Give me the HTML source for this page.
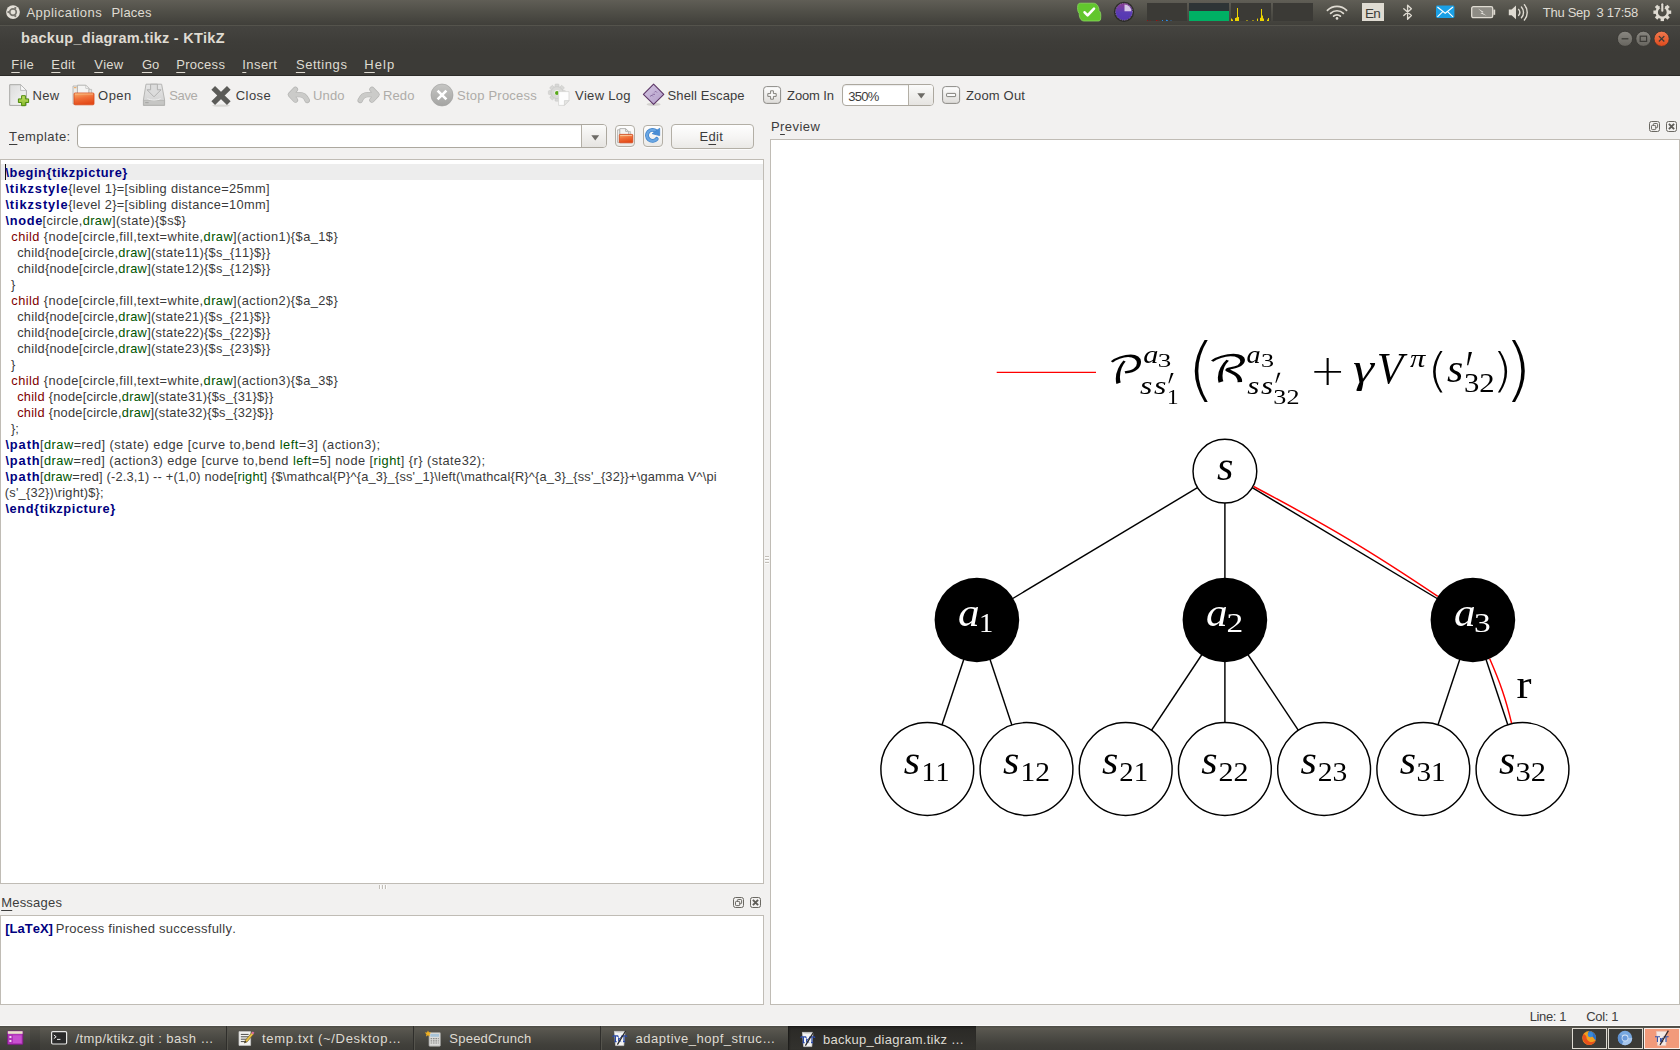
<!DOCTYPE html>
<html lang="en">
<head>
<meta charset="utf-8">
<title>backup_diagram.tikz - KTikZ</title>
<style>

*{box-sizing:border-box;margin:0;padding:0}
html,body{width:1680px;height:1050px;overflow:hidden;background:#f2f1f0;font-family:"Liberation Sans",sans-serif;font-size:13px;color:#3c3c3c;font-kerning:none}
.abs{position:absolute}
.L{position:absolute;white-space:pre;line-height:0;font-kerning:none}
.L u{text-decoration:underline;text-decoration-thickness:1px;text-underline-offset:3px}
svg{position:absolute;overflow:visible}
#panel{left:0;top:0;width:1680px;height:25px;background:linear-gradient(#605e56,#4f4e47 50%,#403f3a);color:#dfdbd2}
#panelline{left:0;top:25px;width:1680px;height:1px;background:#54534c}
#title{left:0;top:26px;width:1680px;height:26px;background:linear-gradient(#454440,#3e3d39 60%,#3c3b37);color:#dfdbd2}
#menu{left:0;top:52px;width:1680px;height:24px;background:#3c3b37;color:#dfdbd2;border-bottom:1px solid #2c2b28}
#editor{left:0;top:159px;width:764px;height:725px;background:#fff;border:1px solid #c0bcb5}
#hl{left:1px;top:164px;width:762px;height:16px;background:#ededed}
#cursor{left:5px;top:164px;width:1px;height:16px;background:#111}
#msg{left:0;top:915px;width:764px;height:90px;background:#fff;border:1px solid #c0bcb5}
#preview{left:770px;top:139px;width:910px;height:866px;background:#fff;border:1px solid #c0bcb5}
#taskbar{left:0;top:1026px;width:1680px;height:24px;background:linear-gradient(#4b4a44,#5a5850 10%,#4c4b45 45%,#403f3a 80%,#3d3c38);color:#dfdbd2}
#taskline{left:0;top:1025px;width:1680px;height:1px;background:#fbfbfa}
.code b{color:#000080}
.code i{font-style:normal;color:#005400}
.code em{font-style:normal;color:#800000}
.field{background:#fff;border:1px solid #aca89f;border-radius:3px;box-shadow:inset 0 1px 1px rgba(0,0,0,.08)}
.btn{border:1px solid #b3afa6;border-radius:4px;background:linear-gradient(#fefefe,#f5f4f3 55%,#eae9e6);box-shadow:0 1px 0 rgba(255,255,255,.7)}
.sep{width:1px;height:24px;top:1026px;background:#2f2e2b;box-shadow:1px 0 0 #55544d}

</style>
</head>
<body>
<div id="ui">
<div id="panel" class="abs"></div>
<div id="title" class="abs"></div><div id="panelline" class="abs"></div>
<div id="menu" class="abs"></div>
<span class="L" style="left:26.40px;top:13.00px;font-size:13px;letter-spacing:0.483px;color:#dfdbd2;">Applications</span>
<span class="L" style="left:111.48px;top:13.00px;font-size:13px;letter-spacing:0.181px;color:#dfdbd2;">Places</span>
<div class="abs" style="left:1362px;top:3px;width:22px;height:18px;background:#dfdbd2"></div>
<span class="L" style="left:1364.95px;top:14.00px;font-size:13.5px;letter-spacing:-0.700px;color:#3c3b37;">En</span>
<span class="L" style="left:1542.80px;top:13.00px;font-size:13px;letter-spacing:-0.287px;color:#dfdbd2;">Thu Sep  3 17:58</span>
<span class="L" style="left:21.09px;top:38.00px;font-size:14.5px;letter-spacing:0.264px;color:#dfdbd2;font-weight:bold;">backup_diagram.tikz - KTikZ</span>
<span class="L" style="left:11.28px;top:65.00px;font-size:13px;letter-spacing:0.532px;color:#dfdbd2;"><u>F</u>ile</span>
<span class="L" style="left:51.28px;top:65.00px;font-size:13px;letter-spacing:0.423px;color:#dfdbd2;"><u>E</u>dit</span>
<span class="L" style="left:94.30px;top:65.00px;font-size:13px;letter-spacing:0.221px;color:#dfdbd2;"><u>V</u>iew</span>
<span class="L" style="left:141.89px;top:65.00px;font-size:13px;letter-spacing:0.094px;color:#dfdbd2;"><u>G</u>o</span>
<span class="L" style="left:176.28px;top:65.00px;font-size:13px;letter-spacing:0.277px;color:#dfdbd2;"><u>P</u>rocess</span>
<span class="L" style="left:242.28px;top:65.00px;font-size:13px;letter-spacing:0.432px;color:#dfdbd2;"><u>I</u>nsert</span>
<span class="L" style="left:295.89px;top:65.00px;font-size:13px;letter-spacing:0.577px;color:#dfdbd2;"><u>S</u>ettings</span>
<span class="L" style="left:364.28px;top:65.00px;font-size:13px;letter-spacing:1.102px;color:#dfdbd2;"><u>H</u>elp</span>
<span class="L" style="left:32.48px;top:96.00px;font-size:13px;letter-spacing:0.275px;color:#3c3c3c;">New</span>
<span class="L" style="left:98.09px;top:96.00px;font-size:13px;letter-spacing:0.446px;color:#3c3c3c;">Open</span>
<span class="L" style="left:169.29px;top:96.00px;font-size:13px;letter-spacing:-0.366px;color:#aeaca8;">Save</span>
<span class="L" style="left:235.69px;top:96.00px;font-size:13px;letter-spacing:0.475px;color:#3c3c3c;">Close</span>
<span class="L" style="left:312.99px;top:96.00px;font-size:13px;letter-spacing:0.154px;color:#aeaca8;">Undo</span>
<span class="L" style="left:382.88px;top:96.00px;font-size:13px;letter-spacing:0.188px;color:#aeaca8;">Redo</span>
<span class="L" style="left:457.09px;top:96.00px;font-size:13px;letter-spacing:0.209px;color:#aeaca8;">Stop Process</span>
<span class="L" style="left:575.00px;top:96.00px;font-size:13px;letter-spacing:0.279px;color:#3c3c3c;">View Log</span>
<span class="L" style="left:667.59px;top:96.00px;font-size:13px;letter-spacing:0.096px;color:#3c3c3c;">Shell Escape</span>
<span class="L" style="left:787.09px;top:96.00px;font-size:13px;letter-spacing:-0.125px;color:#3c3c3c;">Zoom In</span>
<span class="L" style="left:965.89px;top:96.00px;font-size:13px;letter-spacing:0.181px;color:#3c3c3c;">Zoom Out</span>
<div class="abs field" style="left:842px;top:84px;width:92px;height:22px;border-radius:4px"></div>
<div class="abs" style="left:908px;top:85px;width:25px;height:20px;border-left:1px solid #b3afa6;border-radius:0 3px 3px 0;background:linear-gradient(#fbfbfa,#e6e4e1)"></div>
<svg style="left:917px;top:93px" width="9" height="6"><path d="M0.3 0.3H8.2L4.25 5.6Z" fill="#6d6b66"/></svg>
<span class="L" style="left:848.29px;top:97.00px;font-size:13px;letter-spacing:-0.719px;color:#3c3c3c;">350%</span>
<span class="L" style="left:9.00px;top:137.00px;font-size:13px;letter-spacing:0.422px;color:#3c3c3c;"><u>T</u>emplate:</span>
<div class="abs field" style="left:77px;top:124px;width:530px;height:24px;border-radius:4px"></div>
<div class="abs" style="left:581px;top:125px;width:25px;height:22px;border-left:1px solid #b3afa6;border-radius:0 3px 3px 0;background:linear-gradient(#fbfbfa,#e6e4e1)"></div>
<svg style="left:591px;top:135px" width="9" height="6"><path d="M0.3 0.3H8.2L4.25 5.6Z" fill="#6d6b66"/></svg>
<div class="abs btn" style="left:615px;top:125px;width:20px;height:22px"></div>
<div class="abs btn" style="left:643px;top:125px;width:20px;height:22px"></div>
<div class="abs btn" style="left:671px;top:124px;width:83px;height:25px"></div>
<span class="L" style="left:699.38px;top:137.00px;font-size:13px;letter-spacing:0.390px;color:#3c3c3c;">E<u>d</u>it</span>
<span class="L" style="left:770.98px;top:127.00px;font-size:13px;letter-spacing:0.437px;color:#3c3c3c;">P<u>r</u>eview</span>
<div id="editor" class="abs"></div><div id="hl" class="abs"></div><div id="cursor" class="abs"></div>
<div id="preview" class="abs"></div>
<span class="L" style="left:1.18px;top:903.00px;font-size:13px;letter-spacing:0.210px;color:#3c3c3c;"><u>M</u>essages</span>
<div id="msg" class="abs"></div>
<span class="L" style="left:5.29px;top:929.00px;font-size:13px;color:#000080;font-weight:bold;">[LaTeX]</span>
<span class="L" style="left:55.78px;top:929.00px;font-size:13px;letter-spacing:0.252px;color:#3c3c3c;">Process finished successfully.</span>
<span class="L" style="left:1529.68px;top:1017.00px;font-size:13px;letter-spacing:-0.365px;color:#3c3c3c;">Line: 1</span>
<span class="L" style="left:1586.19px;top:1017.00px;font-size:13px;letter-spacing:-0.325px;color:#3c3c3c;">Col: 1</span>
<div id="taskline" class="abs"></div><div id="taskbar" class="abs"></div>
<div class="abs" style="left:788px;top:1026px;width:188px;height:24px;background:linear-gradient(#2a2926,#33322e);box-shadow:inset 1px 1px 2px rgba(0,0,0,.5)"></div>
<div class="abs sep" style="left:226px"></div>
<div class="abs sep" style="left:413px"></div>
<div class="abs sep" style="left:600px"></div>
<span class="L" style="left:75.40px;top:1039.00px;font-size:13px;letter-spacing:0.461px;color:#dfdbd2;">/tmp/ktikz.git : bash …</span>
<span class="L" style="left:262.00px;top:1039.00px;font-size:13px;letter-spacing:0.687px;color:#dfdbd2;">temp.txt (~/Desktop…</span>
<span class="L" style="left:449.29px;top:1039.00px;font-size:13px;letter-spacing:0.244px;color:#dfdbd2;">SpeedCrunch</span>
<span class="L" style="left:635.59px;top:1039.00px;font-size:13px;letter-spacing:0.508px;color:#dfdbd2;">adaptive_hopf_struc…</span>
<span class="L" style="left:823.09px;top:1040.00px;font-size:13px;letter-spacing:0.260px;color:#dfdbd2;">backup_diagram.tikz …</span>
</div>
<div id="source" class="source">
<span class="L code" style="left:5.40px;top:173.00px;font-size:12.8px;letter-spacing:0.573px;color:#000080;font-weight:bold;">\begin{tikzpicture}</span>
<span class="L code" style="left:5.40px;top:189.00px;font-size:12.8px;letter-spacing:0.917px;color:#000080;font-weight:bold;">\tikzstyle</span>
<span class="L code" style="left:68.20px;top:189.00px;font-size:12.8px;letter-spacing:0.335px;color:#3a3a3a;">{level 1}=[sibling distance=25mm]</span>
<span class="L code" style="left:5.40px;top:205.00px;font-size:12.8px;letter-spacing:0.917px;color:#000080;font-weight:bold;">\tikzstyle</span>
<span class="L code" style="left:68.20px;top:205.00px;font-size:12.8px;letter-spacing:0.335px;color:#3a3a3a;">{level 2}=[sibling distance=10mm]</span>
<span class="L code" style="left:5.40px;top:221.00px;font-size:12.8px;letter-spacing:0.722px;color:#000080;font-weight:bold;">\node</span>
<span class="L code" style="left:42.50px;top:221.00px;font-size:12.8px;letter-spacing:0.395px;color:#3a3a3a;">[circle,<i>draw</i>](state){$s$}</span>
<span class="L code" style="left:11.30px;top:237.00px;font-size:12.8px;letter-spacing:0.443px;color:#3a3a3a;"><em>child</em> {node[circle,fill,text=white,<i>draw</i>](action1){$a_1$}</span>
<span class="L code" style="left:17.20px;top:253.00px;font-size:12.8px;letter-spacing:0.281px;color:#3a3a3a;">child{node[circle,<i>draw</i>](state11){$s_{11}$}}</span>
<span class="L code" style="left:17.20px;top:269.00px;font-size:12.8px;letter-spacing:0.281px;color:#3a3a3a;">child{node[circle,<i>draw</i>](state12){$s_{12}$}}</span>
<span class="L code" style="left:11.00px;top:285.00px;font-size:12.8px;color:#3a3a3a;">}</span>
<span class="L code" style="left:11.30px;top:301.00px;font-size:12.8px;letter-spacing:0.443px;color:#3a3a3a;"><em>child</em> {node[circle,fill,text=white,<i>draw</i>](action2){$a_2$}</span>
<span class="L code" style="left:17.20px;top:317.00px;font-size:12.8px;letter-spacing:0.281px;color:#3a3a3a;">child{node[circle,<i>draw</i>](state21){$s_{21}$}}</span>
<span class="L code" style="left:17.20px;top:333.00px;font-size:12.8px;letter-spacing:0.281px;color:#3a3a3a;">child{node[circle,<i>draw</i>](state22){$s_{22}$}}</span>
<span class="L code" style="left:17.20px;top:349.00px;font-size:12.8px;letter-spacing:0.281px;color:#3a3a3a;">child{node[circle,<i>draw</i>](state23){$s_{23}$}}</span>
<span class="L code" style="left:11.00px;top:365.00px;font-size:12.8px;color:#3a3a3a;">}</span>
<span class="L code" style="left:11.30px;top:381.00px;font-size:12.8px;letter-spacing:0.443px;color:#3a3a3a;"><em>child</em> {node[circle,fill,text=white,<i>draw</i>](action3){$a_3$}</span>
<span class="L code" style="left:17.20px;top:397.00px;font-size:12.8px;letter-spacing:0.261px;color:#3a3a3a;"><em>child</em> {node[circle,<i>draw</i>](state31){$s_{31}$}}</span>
<span class="L code" style="left:17.20px;top:413.00px;font-size:12.8px;letter-spacing:0.261px;color:#3a3a3a;"><em>child</em> {node[circle,<i>draw</i>](state32){$s_{32}$}}</span>
<span class="L code" style="left:11.00px;top:429.00px;font-size:12.8px;color:#3a3a3a;">};</span>
<span class="L code" style="left:5.40px;top:445.00px;font-size:12.8px;letter-spacing:0.923px;color:#000080;font-weight:bold;">\path</span>
<span class="L code" style="left:5.40px;top:461.00px;font-size:12.8px;letter-spacing:0.923px;color:#000080;font-weight:bold;">\path</span>
<span class="L code" style="left:5.40px;top:477.00px;font-size:12.8px;letter-spacing:0.923px;color:#000080;font-weight:bold;">\path</span>
<span class="L code" style="left:39.90px;top:445.00px;font-size:12.8px;letter-spacing:0.485px;color:#3a3a3a;">[<i>draw</i>=red] (state) edge [curve to,bend <i>left</i>=3] (action3);</span>
<span class="L code" style="left:39.90px;top:461.00px;font-size:12.8px;letter-spacing:0.453px;color:#3a3a3a;">[<i>draw</i>=red] (action3) edge [curve to,bend <i>left</i>=5] node [<i>right</i>] {r} (state32);</span>
<span class="L code" style="left:39.90px;top:477.00px;font-size:12.8px;letter-spacing:0.202px;color:#3a3a3a;">[<i>draw</i>=red] (-2.3,1) -- +(1,0) node[<i>right</i>] {$\mathcal{P}^{a_3}_{ss'_1}\left(\mathcal{R}^{a_3}_{ss'_{32}}+\gamma V^\pi</span>
<span class="L code" style="left:4.85px;top:493.00px;font-size:12.8px;letter-spacing:0.217px;color:#3a3a3a;">(s'_{32})\right)$};</span>
<span class="L code" style="left:5.40px;top:509.00px;font-size:12.8px;letter-spacing:0.593px;color:#000080;font-weight:bold;">\end{tikzpicture}</span>
</div>
<div id="icons">
<svg width="0" height="0" style="left:0;top:0"><defs>
<linearGradient id="gPage" x1="0" y1="0" x2="1" y2="1"><stop offset="0" stop-color="#dcdcdc"/><stop offset="1" stop-color="#f6f6f6"/></linearGradient>
<linearGradient id="gOr" x1="0" y1="0" x2="0.3" y2="1"><stop offset="0" stop-color="#f8b06c"/><stop offset="0.5" stop-color="#f0703a"/><stop offset="1" stop-color="#e44a18"/></linearGradient>
<linearGradient id="gGr" x1="0" y1="0" x2="0" y2="1"><stop offset="0" stop-color="#c4e066"/><stop offset="1" stop-color="#86b82a"/></linearGradient>
<linearGradient id="gSave" x1="0" y1="0" x2="0" y2="1"><stop offset="0" stop-color="#e6e6e6"/><stop offset="1" stop-color="#d0d0d0"/></linearGradient>
<linearGradient id="gStop" x1="0" y1="0" x2="0" y2="1"><stop offset="0" stop-color="#c6c6c4"/><stop offset="1" stop-color="#a4a4a2"/></linearGradient>
<linearGradient id="gBtn" x1="0" y1="0" x2="0" y2="1"><stop offset="0" stop-color="#ffffff"/><stop offset="1" stop-color="#dddbd8"/></linearGradient>
<linearGradient id="gClk" x1="0" y1="0" x2="0" y2="1"><stop offset="0" stop-color="#8a3c92"/><stop offset="0.55" stop-color="#5a3cb4"/><stop offset="1" stop-color="#5636b0"/></linearGradient>
<linearGradient id="gPur" x1="0" y1="0" x2="1" y2="1"><stop offset="0" stop-color="#d4c6e2"/><stop offset="1" stop-color="#b29cc8"/></linearGradient>
<linearGradient id="gMin" x1="0" y1="0" x2="0" y2="1"><stop offset="0" stop-color="#8a8882"/><stop offset="1" stop-color="#66645e"/></linearGradient>
<linearGradient id="gCls" x1="0" y1="0" x2="0" y2="1"><stop offset="0" stop-color="#f27a50"/><stop offset="1" stop-color="#dd4a1c"/></linearGradient>
<linearGradient id="gBlue" x1="0" y1="0" x2="0" y2="1"><stop offset="0" stop-color="#7ab0e6"/><stop offset="1" stop-color="#2f78c8"/></linearGradient>
</defs></svg>
<svg style="left:5px;top:4px" width="16" height="16" viewBox="0 0 16 16" ><circle cx="8" cy="8.1" r="6.9" fill="#e4e0d8"/><circle cx="8" cy="8.1" r="3.3" fill="none" stroke="#77756e" stroke-width="1.7"/>
<circle cx="3.4" cy="8.1" r="1.15" fill="#77756e"/><circle cx="10.3" cy="4.1" r="1.15" fill="#77756e"/><circle cx="10.3" cy="12.1" r="1.15" fill="#77756e"/></svg>
<svg style="left:1077px;top:2px" width="25" height="20" viewBox="0 0 25 20" ><path d="M3.5 1.2H16.5C20 1.2 22 5 22 8.5C24 10 24 13 23.6 17C23.4 18.6 22.5 19 21 19H7C3.5 19 2.2 15 2.2 11.5C0.4 9.5 0.4 6 0.8 3.4C1 1.8 2 1.2 3.5 1.2Z" fill="#62c62e" stroke="#8ad860" stroke-width="0.8"/>
<path d="M7.6 10.3L10.6 13.4L17 6.6" fill="none" stroke="#fff" stroke-width="2.6" stroke-linecap="round" stroke-linejoin="round"/></svg>
<svg style="left:1113px;top:1px" width="22" height="22" viewBox="0 0 22 22" ><circle cx="11" cy="10.8" r="10.1" fill="#2b2a27"/><circle cx="11" cy="10.8" r="8.5" fill="url(#gClk)" stroke="#a890cc" stroke-width="0.7" stroke-dasharray="0.8 1"/>
<path d="M11.5 10.3V3.4A6.9 6.9 0 0 1 18.4 10.3Z" fill="#d6c6e6"/></svg>
<svg style="left:1147px;top:3px" width="166" height="18" viewBox="0 0 166 18" ><rect x="0" y="0" width="40" height="18" fill="#3b3a36"/><path d="M0.5 18V17.4M3 18V17.6M9.5 18V17.2M11 18V17.5" stroke="#c00000" stroke-width="1"/><path d="M15.5 18V17M19.5 18V16.8M20.5 18V17.2M24 18V17.4" stroke="#2a8be8" stroke-width="1"/><rect x="42" y="0" width="40" height="18" fill="#2e3436"/><rect x="42" y="8" width="40" height="10" fill="#00b064"/><rect x="84" y="0" width="40" height="18" fill="#3b3a36"/><path d="M84.5 18V15.5M85.5 18V16.5M88.5 18V15M89.5 18V14.5M90.5 18V5M91.5 18V14M100 18V17M106 18V17M110.5 18V15.6M113.5 18V14.8M114.5 18V6M115.5 18V12.5M116.5 18V15.5M120.5 18V16.5M121.5 18V15" stroke="#edd400" stroke-width="1"/><rect x="126" y="0" width="40" height="18" fill="#3b3a36"/></svg>
<svg style="left:1326px;top:5px" width="22" height="15" viewBox="0 0 22 15" ><g fill="none" stroke="#dfdbd2" stroke-linecap="round"><path d="M1.4 5.4A13.5 13.5 0 0 1 20.6 5.4" stroke-width="1.7"/><path d="M4.6 8.4A9 9 0 0 1 17.4 8.4" stroke-width="1.7"/><path d="M7.6 11.2A4.8 4.8 0 0 1 14.4 11.2" stroke-width="1.7"/></g><circle cx="11" cy="13.4" r="1.3" fill="#dfdbd2"/></svg>
<svg style="left:1402px;top:4px" width="12" height="17" viewBox="0 0 12 17" ><path d="M1.8 4.8L9.4 11.6L5.6 15.2V1.2L9.4 4.8L1.8 11.6" fill="none" stroke="#dfdbd2" stroke-width="1.35" stroke-linejoin="round" stroke-linecap="round"/></svg>
<svg style="left:1436px;top:5px" width="19" height="14" viewBox="0 0 19 14" ><rect x="0" y="0.6" width="18.4" height="12.4" rx="1.4" fill="#1aa0e6"/><path d="M1.4 2L9.2 8.2L17 2M1.4 11.8L6.8 6.6M17 11.8L11.6 6.6" fill="none" stroke="#fff" stroke-width="1.1"/></svg>
<svg style="left:1471px;top:6px" width="25" height="13" viewBox="0 0 25 13" ><rect x="0.7" y="0.7" width="21" height="11" rx="1.6" fill="#8e8c85" stroke="#dfdbd2" stroke-width="1.3"/><rect x="22.4" y="3.6" width="1.8" height="5.2" fill="#dfdbd2"/><path d="M7 2.6L12.6 6L10.8 6.6L15.6 9.8L9.4 7.2L11.4 6.4Z" fill="#efece6"/></svg>
<svg style="left:1508px;top:4px" width="22" height="17" viewBox="0 0 22 17" ><path d="M0.8 5.6H3.6L8 1.6V15.2L3.6 11.2H0.8Z" fill="#dfdbd2"/><g fill="none" stroke="#dfdbd2" stroke-width="1.4" stroke-linecap="round"><path d="M10.6 5.4A4.6 4.6 0 0 1 10.6 11.4"/><path d="M13.4 3A8 8 0 0 1 13.4 13.8"/><path d="M16.4 0.8A11.6 11.6 0 0 1 16.4 16"/></g></svg>
<svg style="left:1653px;top:3px" width="19" height="18" viewBox="0 0 19 18" ><g transform="translate(9.3 9.2)"><circle r="5.6" fill="none" stroke="#dfdbd2" stroke-width="2.4"/><rect x="-1.7" y="-8.9" width="3.4" height="4" transform="rotate(45)" fill="#dfdbd2"/><rect x="-1.7" y="-8.9" width="3.4" height="4" transform="rotate(90)" fill="#dfdbd2"/><rect x="-1.7" y="-8.9" width="3.4" height="4" transform="rotate(135)" fill="#dfdbd2"/><rect x="-1.7" y="-8.9" width="3.4" height="4" transform="rotate(180)" fill="#dfdbd2"/><rect x="-1.7" y="-8.9" width="3.4" height="4" transform="rotate(225)" fill="#dfdbd2"/><rect x="-1.7" y="-8.9" width="3.4" height="4" transform="rotate(270)" fill="#dfdbd2"/><rect x="-1.7" y="-8.9" width="3.4" height="4" transform="rotate(315)" fill="#dfdbd2"/><rect x="-2.6" y="-9" width="5.2" height="5" fill="#4a4943"/><rect x="-1.05" y="-9" width="2.1" height="8.6" rx="1" fill="#dfdbd2"/></g></svg>
<svg style="left:1616px;top:30px" width="56" height="18" viewBox="0 0 56 18" ><circle cx="9" cy="8.8" r="7.6" fill="url(#gMin)" stroke="#33322e" stroke-width="0.8"/><path d="M5.6 8.8H12.4" stroke="#3c3b37" stroke-width="1.3"/>
<circle cx="27.4" cy="8.8" r="7.6" fill="url(#gMin)" stroke="#33322e" stroke-width="0.8"/><rect x="24.2" y="6.2" width="6.4" height="5.2" fill="none" stroke="#3c3b37" stroke-width="1.2"/>
<circle cx="45.6" cy="8.8" r="7.6" fill="url(#gCls)" stroke="#33322e" stroke-width="0.8"/><path d="M42.9 6.1L48.3 11.5M48.3 6.1L42.9 11.5" stroke="#3c3b37" stroke-width="1.3"/></svg>
<svg style="left:8px;top:83px" width="22" height="24" viewBox="0 0 22 24" ><path d="M1.7 1.7H12.6L18.4 7.4V22.4H1.7Z" fill="url(#gPage)" stroke="#a8a8a6" stroke-width="1"/><path d="M12.6 1.7V7.4H18.4Z" fill="#fafafa" stroke="#b4b4b2" stroke-width="0.8"/>
<path d="M13.6 12.7H17.4V15.9H20.6V19.5H17.4V22.7H13.6V19.5H10.4V15.9H13.6Z" fill="url(#gGr)" stroke="#4e8a0c" stroke-width="1" stroke-linejoin="round"/></svg>
<svg style="left:72px;top:83px" width="23" height="24" viewBox="0 0 23 24" ><path d="M1 3H5.5V21H1Z" fill="#ecebe8" stroke="#b0aeaa" stroke-width="0.8"/><rect x="2" y="4.2" width="2.4" height="1" fill="#f0a050"/>
<path d="M5.4 2.2H13.8L17 5.4V14H5.4Z" fill="#f4f4f3" stroke="#aeaeac" stroke-width="0.9"/><path d="M13.8 2.2V5.4H17Z" fill="#fff" stroke="#b8b8b6" stroke-width="0.7"/><path d="M17 6.4H19.6V14H17Z" fill="#e4e4e2" stroke="#b4b4b2" stroke-width="0.7"/>
<rect x="2" y="10" width="20" height="11.8" rx="1" fill="url(#gOr)" stroke="#d84818" stroke-width="0.8"/><path d="M3 11H21" stroke="#fbd0a0" stroke-width="0.8" opacity="0.8"/></svg>
<svg style="left:142px;top:83px" width="24" height="24" viewBox="0 0 24 24" ><path d="M4 1.2H19.6L22.6 17V22.4H1.4V17Z" fill="url(#gSave)" stroke="#b6b6b4" stroke-width="1"/><path d="M1.6 17.4H22.4V22.2H1.6Z" fill="#c6c6c4" stroke="#b0b0ae" stroke-width="0.7"/><rect x="3.2" y="19" width="3.4" height="1.2" fill="#a8a8a6"/>
<path d="M5.4 15.4C8.5 17.6 15.5 17.6 18.6 15.4" fill="none" stroke="#efefef" stroke-width="1"/>
<path d="M8.6 1.2H15.4V6.8H19L12 13.8L5 6.8H8.6Z" fill="#dcdcdc" stroke="#adadab" stroke-width="0.9" stroke-linejoin="round"/></svg>
<svg style="left:210px;top:85px" width="22" height="22" viewBox="0 0 22 22" ><ellipse cx="11" cy="20.6" rx="9" ry="1.2" fill="#d8d7d4"/><path d="M3.2 2.8L18.8 18.2M18.8 2.8L3.2 18.2" stroke="#5b5b58" stroke-width="5.2"/></svg>
<svg style="left:286.5px;top:86px" width="24" height="18" viewBox="0 0 24 18" ><path d="M8.4 3.4L3.4 8.7L8.4 14M4.6 8.6H12.6C16.6 8.6 18.8 11 20.2 14.4" fill="none" stroke="#b3b3b1" stroke-width="5.4" stroke-linecap="round" stroke-linejoin="round"/><path d="M8.4 3.4L3.4 8.7L8.4 14M4.6 8.6H12.6C16.6 8.6 18.8 11 20.2 14.4" fill="none" stroke="#cbcbc9" stroke-width="4.1" stroke-linecap="round" stroke-linejoin="round"/></svg>
<svg style="left:356.5px;top:86px" width="24" height="18" viewBox="0 0 24 18" ><g transform="translate(23.4 0) scale(-1 1)"><path d="M8.4 3.4L3.4 8.7L8.4 14M4.6 8.6H12.6C16.6 8.6 18.8 11 20.2 14.4" fill="none" stroke="#b3b3b1" stroke-width="5.4" stroke-linecap="round" stroke-linejoin="round"/><path d="M8.4 3.4L3.4 8.7L8.4 14M4.6 8.6H12.6C16.6 8.6 18.8 11 20.2 14.4" fill="none" stroke="#cbcbc9" stroke-width="4.1" stroke-linecap="round" stroke-linejoin="round"/></g></svg>
<svg style="left:430px;top:83px" width="24" height="24" viewBox="0 0 24 24" ><circle cx="12" cy="12" r="11" fill="url(#gStop)" stroke="#9e9e9c" stroke-width="0.6"/><path d="M7.6 7.6L16.4 16.4M16.4 7.6L7.6 16.4" stroke="#fff" stroke-width="2.7"/></svg>
<svg style="left:548px;top:83px" width="23" height="24" viewBox="0 0 23 24" ><g transform="translate(9 9.6)"><rect x="-2" y="-8.6" width="4" height="4" rx="0.8" transform="rotate(0)" fill="#d8d8d6" stroke="#c6c6c4" stroke-width="0.5"/><rect x="-2" y="-8.6" width="4" height="4" rx="0.8" transform="rotate(45)" fill="#d8d8d6" stroke="#c6c6c4" stroke-width="0.5"/><rect x="-2" y="-8.6" width="4" height="4" rx="0.8" transform="rotate(90)" fill="#d8d8d6" stroke="#c6c6c4" stroke-width="0.5"/><rect x="-2" y="-8.6" width="4" height="4" rx="0.8" transform="rotate(135)" fill="#d8d8d6" stroke="#c6c6c4" stroke-width="0.5"/><rect x="-2" y="-8.6" width="4" height="4" rx="0.8" transform="rotate(180)" fill="#d8d8d6" stroke="#c6c6c4" stroke-width="0.5"/><rect x="-2" y="-8.6" width="4" height="4" rx="0.8" transform="rotate(225)" fill="#d8d8d6" stroke="#c6c6c4" stroke-width="0.5"/><rect x="-2" y="-8.6" width="4" height="4" rx="0.8" transform="rotate(270)" fill="#d8d8d6" stroke="#c6c6c4" stroke-width="0.5"/><rect x="-2" y="-8.6" width="4" height="4" rx="0.8" transform="rotate(315)" fill="#d8d8d6" stroke="#c6c6c4" stroke-width="0.5"/><circle r="6" fill="#dadad8" stroke="#c6c6c4" stroke-width="0.6"/><circle r="2.6" fill="#f4f4f2"/><circle cx="0" cy="0.4" r="2" fill="#58a818"/></g>
<path d="M10.6 8.6H21V17.6L16.4 22.4H10.6Z" fill="#fdfdfd" stroke="#d4d4d2" stroke-width="0.8"/><path d="M21 17.6H16.4V22.4Z" fill="#e6e6e4" stroke="#cfcfcd" stroke-width="0.7"/></svg>
<svg style="left:642px;top:83px" width="24" height="24" viewBox="0 0 24 24" ><ellipse cx="11.6" cy="21.4" rx="7" ry="1.6" fill="#d4d2cf"/><path d="M11.6 1.2L21.8 11.3L11.6 21.4L1.4 11.3Z" fill="url(#gPur)" stroke="#5c3566" stroke-width="1.1" stroke-linejoin="round"/>
<path d="M8 13.4L10 12.2L11 13.4M12.4 9.4L13.6 8.2L15 9.6M10.4 11.2L13 11.4" fill="none" stroke="#7e5e96" stroke-width="1" opacity="0.8"/></svg>
<svg style="left:763px;top:86px" width="19" height="19" viewBox="0 0 19 19" ><rect x="0.6" y="0.6" width="17" height="16.8" rx="3" fill="url(#gBtn)" stroke="#8c8a86" stroke-width="1"/><path d="M7.6 4.8H10.4V7.6H13.2V10.4H10.4V13.2H7.6V10.4H4.8V7.6H7.6Z" fill="#fafafa" stroke="#77756f" stroke-width="0.9"/></svg>
<svg style="left:942px;top:86px" width="19" height="19" viewBox="0 0 19 19" ><rect x="0.6" y="0.6" width="17" height="16.8" rx="3" fill="url(#gBtn)" stroke="#8c8a86" stroke-width="1"/><rect x="4.6" y="7.4" width="9" height="3.2" rx="0.6" fill="#fafafa" stroke="#77756f" stroke-width="0.9"/></svg>
<svg style="left:616px;top:127px" width="19" height="17" viewBox="0 0 19 17" ><path d="M1.6 2.8H4V15.4H1.6Z" fill="#f4f4f3" stroke="#a8a6a2" stroke-width="0.8"/><path d="M3.8 1.6H9.6L12.6 4.4V8H3.8Z" fill="#f3f3f2" stroke="#a4a4a2" stroke-width="0.8"/><path d="M9.6 1.6V4.4H12.6" fill="none" stroke="#a4a4a2" stroke-width="0.8"/><path d="M12.8 4.6H14.6V8H12.8Z" fill="#ededec" stroke="#b0b0ae" stroke-width="0.7"/>
<rect x="3.3" y="7.4" width="13.5" height="8.4" rx="0.7" fill="url(#gOr)" stroke="#d2451a" stroke-width="0.8"/><path d="M4.2 8.5H16" stroke="#fbd6b0" stroke-width="0.8" opacity="0.85"/></svg>
<svg style="left:643px;top:125px" width="20" height="22" viewBox="0 0 20 22" ><path d="M13.7 13.9A5.5 5.5 0 1 1 13.2 6.3" fill="none" stroke="#3f83cc" stroke-width="3.9" stroke-linecap="round"/><path d="M13.7 13.9A5.5 5.5 0 1 1 13.2 6.3" fill="none" stroke="#6aa6e2" stroke-width="2.4" stroke-linecap="round"/><path d="M16.7 3.3L9.2 8.7L16.7 10.6Z" fill="#4a8ed6" stroke="#3f83cc" stroke-width="0.8" stroke-linejoin="round"/></svg>
<svg style="left:1649px;top:121px" width="29" height="12" viewBox="0 0 29 12" ><rect x="0.5" y="0.5" width="10" height="10" rx="2" fill="none" stroke="#6a6862" stroke-width="1"/><rect x="4.4" y="2.5" width="4.2" height="4.2" rx="0.8" fill="none" stroke="#6a6862" stroke-width="1"/><rect x="2.5" y="4.4" width="4.2" height="4.2" rx="0.8" fill="#f2f1f0" stroke="#6a6862" stroke-width="1"/>
<rect x="17.5" y="0.5" width="10" height="10" rx="2" fill="none" stroke="#6a6862" stroke-width="1"/><path d="M19.9 2.9L25.1 8.1M25.1 2.9L19.9 8.1" stroke="#5e5c57" stroke-width="1.9"/></svg>
<svg style="left:733px;top:897px" width="29" height="12" viewBox="0 0 29 12" ><rect x="0.5" y="0.5" width="10" height="10" rx="2" fill="none" stroke="#6a6862" stroke-width="1"/><rect x="4.4" y="2.5" width="4.2" height="4.2" rx="0.8" fill="none" stroke="#6a6862" stroke-width="1"/><rect x="2.5" y="4.4" width="4.2" height="4.2" rx="0.8" fill="#f2f1f0" stroke="#6a6862" stroke-width="1"/>
<rect x="17.5" y="0.5" width="10" height="10" rx="2" fill="none" stroke="#6a6862" stroke-width="1"/><path d="M19.9 2.9L25.1 8.1M25.1 2.9L19.9 8.1" stroke="#5e5c57" stroke-width="1.9"/></svg>
<svg style="left:379px;top:885px" width="9" height="4" viewBox="0 0 9 4" ><path d="M0.5 0V4M3.5 0V4M6.5 0V4" stroke="#c2beb8" stroke-width="1"/><path d="M1.5 0V4M4.5 0V4M7.5 0V4" stroke="#fdfdfc" stroke-width="1"/></svg>
<svg style="left:765px;top:556px" width="4" height="9" viewBox="0 0 4 9" ><path d="M0 0.5H4M0 3.5H4M0 6.5H4" stroke="#c2beb8" stroke-width="1"/><path d="M0 1.5H4M0 4.5H4M0 7.5H4" stroke="#fdfdfc" stroke-width="1"/></svg>
<svg style="left:7px;top:1030px" width="17" height="16" viewBox="0 0 17 16" ><rect x="0.5" y="1" width="15.4" height="13.6" rx="1" fill="#b035b8" stroke="#7a1a82" stroke-width="0.8"/><rect x="0.8" y="1.2" width="14.8" height="2.6" fill="#e8e4c8"/><rect x="2.4" y="6" width="2" height="2" fill="#f0d8f0"/><rect x="2.4" y="10" width="2" height="2" fill="#f0d8f0"/><rect x="6" y="5.4" width="8.6" height="7.6" fill="#c850d0"/></svg>
<div class="abs" style="left:30px;top:1027px;width:10px;height:23px;opacity:.2;background-image:radial-gradient(circle,#111 0.6px,transparent 0.9px);background-size:2px 2px"></div>
<svg style="left:51px;top:1031px" width="17" height="14" viewBox="0 0 17 14" ><rect x="0.6" y="0.6" width="15" height="12.4" rx="1.2" fill="#2a2a2a" stroke="#e8e8e6" stroke-width="1.2"/><path d="M2.8 4L5.2 5.8L2.8 7.6M6 8.4H9.4" fill="none" stroke="#f2f2f2" stroke-width="1"/></svg>
<svg style="left:238px;top:1030px" width="17" height="17" viewBox="0 0 17 17" ><path d="M1 1.6H12.6V15.4H1Z" fill="#f4f4f2" stroke="#c8c8c6" stroke-width="0.8"/><path d="M2.8 4.4H10.6M2.8 6.8H10.6M2.8 9.2H9M2.8 11.6H7.4" stroke="#4a4a48" stroke-width="1"/><path d="M6.4 13L7.4 10.2L13.8 2.6L15.6 4.2L9.2 11.8Z" fill="#e8c040" stroke="#6a5a30" stroke-width="0.7"/><path d="M13.2 3.2L14.8 1.4L16.4 2.8L15 4.6Z" fill="#e070a0"/><path d="M6.4 13L7.2 10.8L8.6 12Z" fill="#3a3a3a"/></svg>
<svg style="left:425px;top:1030px" width="17" height="17" viewBox="0 0 17 17" ><rect x="4" y="2.6" width="11.4" height="13.6" rx="0.8" fill="#dcdcda" stroke="#9a9a98" stroke-width="0.8"/><rect x="5.4" y="4" width="8.6" height="2.8" fill="#a8c4d8"/><path d="M5.6 8.6H13.8M5.6 10.8H13.8M5.6 13H13.8" stroke="#8a8a88" stroke-width="1.2" stroke-dasharray="1.6 0.8"/><path d="M3 0.4L4 2.4L6.2 2.6L4.6 4.2L5 6.4L3 5.2L1 6.4L1.4 4.2L-0.2 2.6L2 2.4Z" fill="#f0b020"/></svg>
<svg style="left:612px;top:1030px" width="16" height="17" viewBox="0 0 16 17" ><path d="M2.4 1.4H13L11.8 15.6H3.6Z" fill="#f4f4f4" stroke="#d0d0ce" stroke-width="0.7"/><path d="M2.4 1.4C4 2.6 11 2.6 13 1.4" fill="none" stroke="#c8c8c6" stroke-width="0.8"/><path d="M1 5.8H6M3.4 5.8V11.6M1 5.8V7M6 5.8V7M2.4 11.6H4.6" fill="none" stroke="#2848a8" stroke-width="1.2"/><path d="M9.6 5.8H14.6M12 5.8V11.6M9.6 5.8V7M14.6 5.8V7M11 11.6H13.2" fill="none" stroke="#2848a8" stroke-width="1.2"/><path d="M6.6 7.4V11.6M6.6 9.4L9 7.4M6.6 9.4L9.2 11.6" fill="none" stroke="#2848a8" stroke-width="1"/><path d="M13.6 1L5.4 14.6" stroke="#2a2a2a" stroke-width="1.3"/></svg>
<svg style="left:800px;top:1031px" width="16" height="17" viewBox="0 0 16 17" ><path d="M2.4 1.4H13L11.8 15.6H3.6Z" fill="#f4f4f4" stroke="#d0d0ce" stroke-width="0.7"/><path d="M2.4 1.4C4 2.6 11 2.6 13 1.4" fill="none" stroke="#c8c8c6" stroke-width="0.8"/><path d="M1 5.8H6M3.4 5.8V11.6M1 5.8V7M6 5.8V7M2.4 11.6H4.6" fill="none" stroke="#2848a8" stroke-width="1.2"/><path d="M9.6 5.8H14.6M12 5.8V11.6M9.6 5.8V7M14.6 5.8V7M11 11.6H13.2" fill="none" stroke="#2848a8" stroke-width="1.2"/><path d="M6.6 7.4V11.6M6.6 9.4L9 7.4M6.6 9.4L9.2 11.6" fill="none" stroke="#2848a8" stroke-width="1"/><path d="M13.6 1L5.4 14.6" stroke="#2a2a2a" stroke-width="1.3"/></svg>
<div class="abs" style="left:1572px;top:1028px;width:35px;height:21px;background:#3b3a36;border:1px solid #dfdbd2"></div>
<div class="abs" style="left:1608px;top:1028px;width:35px;height:21px;background:#3b3a36;border:1px solid #dfdbd2"></div>
<div class="abs" style="left:1644px;top:1028px;width:36px;height:21px;background:#f29a7a;border:1px solid #fbeee8"></div>
<svg style="left:1581px;top:1030px" width="16" height="16" viewBox="0 0 16 16" ><circle cx="8.2" cy="8" r="6.9" fill="#f0a020"/><path d="M8.2 1.1A6.9 6.9 0 0 1 14.6 10.6C13 9 12 6 9 5.6C7 5.4 6 4 8.2 1.1Z" fill="#2a70c8"/><circle cx="9.4" cy="4.6" r="2.6" fill="#3a8ad8"/><path d="M1.6 6C1 11 4.6 15 8.4 14.9C12 14.8 14 12.6 14.8 10C12 13 8 12.4 6.4 10C5 8 6 6.4 4.6 5.4C3.4 4.6 2.4 4.6 1.6 6Z" fill="#e8501c"/><path d="M2.2 3.6L4.4 5.2L3 7.6Z" fill="#e8501c"/></svg>
<svg style="left:1617px;top:1030px" width="16" height="16" viewBox="0 0 16 16" ><circle cx="8" cy="8" r="7.2" fill="#78a8e0"/><path d="M8 8L1.6 4.4A7.2 7.2 0 0 0 5 14.6Z" fill="#5e90d0"/><path d="M8 8L5 14.6A7.2 7.2 0 0 0 15.2 8Z" fill="#a6c6ec"/><circle cx="8" cy="8" r="3.4" fill="#d8e6f6"/><circle cx="8" cy="8" r="2.6" fill="#6a9ada"/></svg>
<svg style="left:1654px;top:1030px" width="17" height="17" viewBox="0 0 17 17" ><path d="M2.4 1.4H13L11.8 15.6H3.6Z" fill="#f6f2f0" stroke="#e8d0c8" stroke-width="0.7" opacity="0.9"/><path d="M1 6.8H6M3.4 6.8V12M9.6 6.8H14.6M12 6.8V12M6.6 8V12M6.6 10L9 8M6.6 10L9.2 12" fill="none" stroke="#3050a8" stroke-width="1.1"/><path d="M14.4 0.6L6 14.8" stroke="#3a2a2a" stroke-width="1.3"/></svg>
</div>
<div id="diagram">
<svg style="left:0;top:0;will-change:transform" width="1680" height="1050" viewBox="0 0 1680 1050"><path d="M1224.9 471.2L976.9 620.0" stroke="#000" stroke-width="1.45" fill="none"/><path d="M1224.9 471.2L1224.9 620.0" stroke="#000" stroke-width="1.45" fill="none"/><path d="M1224.9 471.2L1472.9 620.0" stroke="#000" stroke-width="1.45" fill="none"/><path d="M976.9 620.0L927.3 769.0" stroke="#000" stroke-width="1.45" fill="none"/><path d="M976.9 620.0L1026.5 769.0" stroke="#000" stroke-width="1.45" fill="none"/><path d="M1224.9 620.0L1125.7 769.0" stroke="#000" stroke-width="1.45" fill="none"/><path d="M1224.9 620.0L1224.9 769.0" stroke="#000" stroke-width="1.45" fill="none"/><path d="M1224.9 620.0L1324.1 769.0" stroke="#000" stroke-width="1.45" fill="none"/><path d="M1472.9 620.0L1423.3 769.0" stroke="#000" stroke-width="1.45" fill="none"/><path d="M1472.9 620.0L1522.5 769.0" stroke="#000" stroke-width="1.45" fill="none"/><circle cx="1224.9" cy="471.2" r="31.88" fill="#fff" stroke="#000" stroke-width="1.45"/><circle cx="976.9" cy="620.0" r="42.3" fill="#000"/><circle cx="1224.9" cy="620.0" r="42.3" fill="#000"/><circle cx="1472.9" cy="620.0" r="42.3" fill="#000"/><circle cx="927.3" cy="769.0" r="46.42" fill="#fff" stroke="#000" stroke-width="1.45"/><circle cx="1026.5" cy="769.0" r="46.42" fill="#fff" stroke="#000" stroke-width="1.45"/><circle cx="1125.7" cy="769.0" r="46.42" fill="#fff" stroke="#000" stroke-width="1.45"/><circle cx="1224.9" cy="769.0" r="46.42" fill="#fff" stroke="#000" stroke-width="1.45"/><circle cx="1324.1" cy="769.0" r="46.42" fill="#fff" stroke="#000" stroke-width="1.45"/><circle cx="1423.3" cy="769.0" r="46.42" fill="#fff" stroke="#000" stroke-width="1.45"/><circle cx="1522.5" cy="769.0" r="46.42" fill="#fff" stroke="#000" stroke-width="1.45"/><path d="M1253.69 486.49C1327.84 525.85 1368.19 549.47 1437.82 596.37" stroke="#f00" stroke-width="1.45" fill="none"/><path d="M1489.71 658.82C1500.27 683.22 1505.39 697.27 1511.56 723.14" stroke="#f00" stroke-width="1.45" fill="none"/><path d="M996.7 372.3H1096" stroke="#f00" stroke-width="1.3" fill="none"/><text transform="translate(1107.35 382.71) scale(1.163 1)" font-family="'DejaVu Math TeX Gyre', 'DejaVu Serif', 'DejaVu Sans', serif" font-size="38.03" fill="#000">𝒫</text><text transform="translate(1143.32 362.90) scale(1.199 1)" font-family="'Liberation Serif', serif" font-size="25.40" font-style="italic" fill="#000">a</text><text transform="translate(1157.73 367.19) scale(1.376 1)" font-family="'Liberation Serif', serif" font-size="19.64" fill="#000">3</text><text transform="translate(1140.00 394.19) scale(1.220 1)" font-family="'Liberation Serif', serif" font-size="26.00" font-style="italic" fill="#000">s</text><text transform="translate(1154.00 394.19) scale(1.220 1)" font-family="'Liberation Serif', serif" font-size="26.00" font-style="italic" fill="#000">s</text><text transform="translate(1160.18 402.34) skewX(-18.4) scale(0.6 1)" font-family="'Liberation Serif', serif" font-size="44.40" fill="#000">'</text><text transform="translate(1166.99 404.00) scale(1.113 1)" font-family="'Liberation Serif', serif" font-size="20.84" fill="#000">1</text><text transform="translate(1186.81 392.52) scale(1.051 1)" font-family="'DejaVu Sans Light', 'DejaVu Sans', sans-serif" font-size="69.52" fill="#000">(</text><text transform="translate(1206.91 382.25) scale(1.356 1)" font-family="'DejaVu Math TeX Gyre', 'DejaVu Serif', 'DejaVu Sans', serif" font-size="36.68" fill="#000">ℛ</text><text transform="translate(1246.56 362.90) scale(1.112 1)" font-family="'Liberation Serif', serif" font-size="25.40" font-style="italic" fill="#000">a</text><text transform="translate(1261.08 367.20) scale(1.348 1)" font-family="'Liberation Serif', serif" font-size="19.35" fill="#000">3</text><text transform="translate(1247.30 394.21) scale(1.237 1)" font-family="'Liberation Serif', serif" font-size="25.20" font-style="italic" fill="#000">s</text><text transform="translate(1261.00 394.21) scale(1.237 1)" font-family="'Liberation Serif', serif" font-size="25.20" font-style="italic" fill="#000">s</text><text transform="translate(1267.40 401.35) skewX(-18.3) scale(0.6 1)" font-family="'Liberation Serif', serif" font-size="43.20" fill="#000">'</text><text transform="translate(1273.37 404.28) scale(1.266 1)" font-family="'Liberation Serif', serif" font-size="20.65" fill="#000">32</text><text transform="translate(1309.79 385.20) scale(1.007 1)" font-family="'DejaVu Sans Light', 'DejaVu Sans', sans-serif" font-size="42.46" fill="#000">+</text><text transform="translate(1352.97 382.32) scale(1.310 1)" font-family="'Liberation Serif', serif" font-size="40.58" font-style="italic" fill="#000">γ</text><text transform="translate(1376.76 382.50) scale(0.973 1)" font-family="'Liberation Serif', serif" font-size="44.65" font-style="italic" fill="#000">V</text><text transform="translate(1410.00 366.70) scale(1.182 1)" font-family="'Liberation Serif', serif" font-size="25.81" font-style="italic" fill="#000">π</text><text transform="translate(1427.17 385.91) scale(1.137 1)" font-family="'DejaVu Sans Light', 'DejaVu Sans', sans-serif" font-size="46.90" fill="#000">(</text><text transform="translate(1447.00 382.19) scale(1.070 1)" font-family="'Liberation Serif', serif" font-size="39.00" font-style="italic" fill="#000">s</text><text transform="translate(1459.63 388.71) skewX(-11.6) scale(0.6 1)" font-family="'Liberation Serif', serif" font-size="56.40" fill="#000">'</text><text transform="translate(1463.96 392.06) scale(1.102 1)" font-family="'Liberation Serif', serif" font-size="27.93" fill="#000">32</text><text transform="translate(1492.34 385.91) scale(1.103 1)" font-family="'DejaVu Sans Light', 'DejaVu Sans', sans-serif" font-size="46.90" fill="#000">)</text><text transform="translate(1504.07 392.52) scale(1.043 1)" font-family="'DejaVu Sans Light', 'DejaVu Sans', sans-serif" font-size="69.52" fill="#000">)</text><text transform="translate(1217.00 480.08) scale(1.073 1)" font-family="'Liberation Serif', serif" font-size="39.40" font-style="italic" fill="#000">s</text><text transform="translate(958.02 626.37) scale(1.071 1)" font-family="'Liberation Serif', serif" font-size="40.40" font-style="italic" fill="#fff">a</text><text transform="translate(978.97 632.10) scale(1.031 1)" font-family="'Liberation Serif', serif" font-size="27.68" fill="#fff">1</text><text transform="translate(1206.02 626.37) scale(1.071 1)" font-family="'Liberation Serif', serif" font-size="40.40" font-style="italic" fill="#fff">a</text><text transform="translate(1226.46 632.20) scale(1.220 1)" font-family="'Liberation Serif', serif" font-size="27.39" fill="#fff">2</text><text transform="translate(1454.02 626.37) scale(1.071 1)" font-family="'Liberation Serif', serif" font-size="40.40" font-style="italic" fill="#fff">a</text><text transform="translate(1473.93 631.78) scale(1.249 1)" font-family="'Liberation Serif', serif" font-size="26.76" fill="#fff">3</text><text transform="translate(903.70 774.18) scale(1.066 1)" font-family="'Liberation Serif', serif" font-size="39.40" font-style="italic" fill="#000">s</text><text transform="translate(921.50 781.00) scale(1.032 1)" font-family="'Liberation Serif', serif" font-size="27.24" fill="#000">11</text><text transform="translate(1002.90 774.18) scale(1.066 1)" font-family="'Liberation Serif', serif" font-size="39.40" font-style="italic" fill="#000">s</text><text transform="translate(1020.60 781.00) scale(1.083 1)" font-family="'Liberation Serif', serif" font-size="27.24" fill="#000">12</text><text transform="translate(1102.10 774.18) scale(1.066 1)" font-family="'Liberation Serif', serif" font-size="39.40" font-style="italic" fill="#000">s</text><text transform="translate(1119.30 781.00) scale(1.055 1)" font-family="'Liberation Serif', serif" font-size="27.24" fill="#000">21</text><text transform="translate(1201.30 774.18) scale(1.066 1)" font-family="'Liberation Serif', serif" font-size="39.40" font-style="italic" fill="#000">s</text><text transform="translate(1218.46 781.00) scale(1.103 1)" font-family="'Liberation Serif', serif" font-size="27.24" fill="#000">22</text><text transform="translate(1300.50 774.18) scale(1.066 1)" font-family="'Liberation Serif', serif" font-size="39.40" font-style="italic" fill="#000">s</text><text transform="translate(1317.68 780.58) scale(1.110 1)" font-family="'Liberation Serif', serif" font-size="26.62" fill="#000">23</text><text transform="translate(1399.70 774.18) scale(1.066 1)" font-family="'Liberation Serif', serif" font-size="39.40" font-style="italic" fill="#000">s</text><text transform="translate(1416.43 780.58) scale(1.099 1)" font-family="'Liberation Serif', serif" font-size="26.62" fill="#000">31</text><text transform="translate(1498.90 774.18) scale(1.066 1)" font-family="'Liberation Serif', serif" font-size="39.40" font-style="italic" fill="#000">s</text><text transform="translate(1515.57 780.58) scale(1.148 1)" font-family="'Liberation Serif', serif" font-size="26.62" fill="#000">32</text><text transform="translate(1516.60 698.30) scale(1.132 1)" font-family="'Liberation Serif', serif" font-size="39.85" fill="#000">r</text></svg>
</div>
</body>
</html>
